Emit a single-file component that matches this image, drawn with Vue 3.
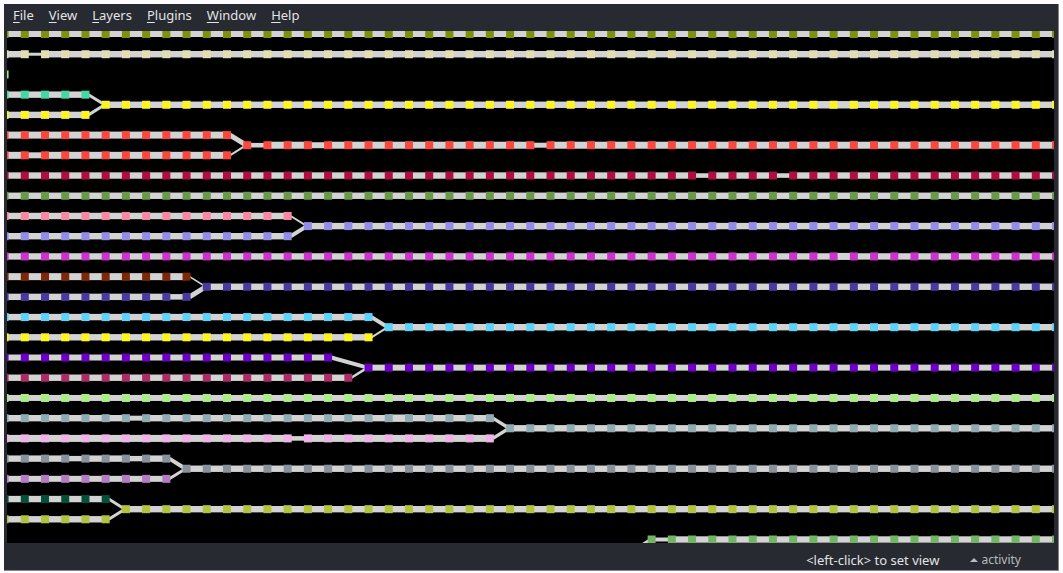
<script setup>
const menus = ['File', 'View', 'Layers', 'Plugins', 'Window', 'Help']

const STEP = 20.22
const LEFT = 17.8
const TOP = 3
const NODE = 8
const LAST = 51

const px = (column) => LEFT + column * STEP
const py = (row) => TOP + row * STEP

// Each lane is a run of nodes on one row; "thin" overrides the width of single links.
const lanes = [
  { row: 0, color: '#7f900f', width: 6 },
  { row: 1, color: '#e3ddb3', width: 6.4, thin: { 0: 3 } },
  { row: 2, color: '#a8e88c', to: -1 },
  { row: 3, color: '#44d7a8', to: 3 },
  { row: 4, color: '#fdf51c', to: 3 },
  { row: 3.5, color: '#fdf51c', from: 4, thin: { 32: 7, 39: 7.4, 40: 7.4, 42: 7 } },
  { row: 5, color: '#fb473e', to: 10, width: 7 },
  { row: 6, color: '#fb473e', to: 10, width: 7, thin: { 0: 6 } },
  { row: 5.5, color: '#fb473e', from: 11, width: 7, thin: { 11: 4.6, 14: 6, 25: 5 } },
  { row: 7, color: '#b00d43', thin: { 33: 4.6, 37: 4.6 } },
  { row: 8, color: '#6b994a' },
  { row: 9, color: '#f887a5', to: 13 },
  { row: 10, color: '#958be8', to: 13 },
  { row: 9.5, color: '#958be8', from: 14 },
  { row: 11, color: '#cc33cc', thin: { 40: 7 } },
  { row: 12, color: '#7c2909', to: 8, width: 7 },
  { row: 13, color: '#4a3a9f', to: 8, thin: { 7: 5.6 } },
  { row: 12.5, color: '#4a3a9f', from: 9 },
  { row: 14, color: '#5bd4fb', to: 17 },
  { row: 15, color: '#fdf51c', to: 17 },
  { row: 14.5, color: '#5bd4fb', from: 18 },
  { row: 16, color: '#6b00c2', to: 15, width: 6 },
  { row: 17, color: '#a82c65', to: 16 },
  { row: 16.5, color: '#6b00c2', from: 17, width: 6 },
  { row: 18, color: '#a9ed86', width: 6 },
  { row: 19, color: '#90acb3', to: 23, thin: { 5: 5, 18: 7.4 } },
  { row: 20, color: '#f0b2e9', to: 23, width: 7, thin: { 13: 4.6 } },
  { row: 19.5, color: '#90acb3', from: 24, width: 6.4 },
  { row: 21, color: '#88929d', to: 7, thin: { 2: 5.4, 5: 5.4 } },
  { row: 22, color: '#b47cc2', to: 7, width: 6 },
  { row: 21.5, color: '#88929d', from: 8 },
  { row: 23, color: '#04503a', to: 4 },
  { row: 24, color: '#b2c43b', to: 4 },
  { row: 23.5, color: '#b2c43b', from: 5 },
  { row: 25, color: '#72b562', from: 31, thin: { 31: 4 } },
].map((lane) => ({ from: -1, to: LAST, width: 6.4, thin: {}, ...lane }))

// Diagonal links: [start column, start row, end column, end row, width]
const merges = [
  [3, 3, 4, 3.5, 3], [3, 4, 4, 3.5, 3],
  [10, 5, 11, 5.5, 5], [10, 6, 11, 5.5, 2],
  [13, 9, 14, 9.5, 2], [13, 10, 14, 9.5, 4],
  [8, 12, 9, 12.5, 1.6], [8, 13, 9, 12.5, 5],
  [17, 14, 18, 14.5, 4], [17, 15, 18, 14.5, 2],
  [15, 16, 17, 16.5, 4], [16, 17, 17, 16.5, 2.6],
  [23, 19, 24, 19.5, 3.4], [23, 20, 24, 19.5, 3.4],
  [7, 21, 8, 21.5, 4], [7, 22, 8, 21.5, 3],
  [4, 23, 5, 23.5, 3], [4, 24, 5, 23.5, 3],
  [30, 25.5, 31, 25, 3],
]

const linkList = lanes.flatMap((lane) =>
  Array.from({ length: lane.to - lane.from }, (_, k) => {
    const column = lane.from + k
    return {
      x1: px(column),
      x2: px(column + 1),
      y1: py(lane.row),
      y2: py(lane.row),
      width: lane.thin[column] ?? lane.width,
    }
  }),
)

const mergeList = merges.map(([a, r, b, s, width]) => ({
  x1: px(a) + 3,
  y1: py(r),
  x2: px(b) - 1,
  y2: py(s),
  width,
}))

const nodes = lanes.flatMap((lane) =>
  Array.from({ length: lane.to - lane.from + 1 }, (_, k) => ({
    x: px(lane.from + k) - NODE / 2,
    y: py(lane.row) - NODE / 2,
    color: lane.color,
  })),
)
</script>

<template>
  <div class="desktop">
    <main class="window">
      <nav class="menubar" aria-label="Main menu">
        <button v-for="name in menus" :key="name" type="button">
          <span class="key">{{ name[0] }}</span>{{ name.slice(1) }}
        </button>
      </nav>

      <svg class="graph" viewBox="0 0 1047 512" role="img" aria-label="Graph view">
        <line
          v-for="(l, i) in [...linkList, ...mergeList]"
          :key="'l' + i"
          :x1="l.x1"
          :y1="l.y1"
          :x2="l.x2"
          :y2="l.y2"
          :stroke-width="l.width"
          stroke="#d3d3d3"
        />
        <rect
          v-for="(n, i) in nodes"
          :key="'n' + i"
          :x="n.x"
          :y="n.y"
          :width="NODE"
          :height="NODE"
          :fill="n.color"
        />
      </svg>

      <footer class="statusbar">
        <span class="hint">&lt;left-click&gt; to set view</span>
        <button type="button" class="activity">
          <svg class="arrow" width="8" height="4" viewBox="0 0 8 4" aria-hidden="true">
            <path d="M0 4 L4 0 L8 4 Z" fill="#b9bbbd" />
          </svg>
          activity
        </button>
      </footer>
    </main>
  </div>
</template>

<style>
body {
  background: #fcfcfe;
}
</style>

<style scoped>
.desktop {
  padding: 4px 4px 2px;
}

.window {
  padding: 0 4px 0 3px;
  border-right: 1px solid #85868a;
  border-bottom: 1px solid #85868a;
  background: #272a31;
  color: #e2e3e4;
  font: 13px/18px "Noto Sans", sans-serif;
}

button {
  margin: 0;
  padding: 0;
  border: 0;
  background: none;
  color: inherit;
  font: inherit;
}

.menubar {
  display: flex;
  gap: 15px;
  height: 27px;
  padding: 0 6px;
  align-items: center;
}

.menubar button {
  padding-bottom: 6px;
}

.key {
  text-decoration: underline;
  text-underline-offset: 2px;
}

.graph {
  display: block;
  width: 100%;
  background: #000;
}

.statusbar {
  display: flex;
  height: 27px;
  padding: 8px 33px 0 0;
  box-sizing: border-box;
  justify-content: flex-end;
  gap: 31px;
}

.activity {
  display: flex;
  align-items: center;
  gap: 3px;
  height: 18px;
  color: #b9bbbd;
  font-size: 12px;
}
</style>
